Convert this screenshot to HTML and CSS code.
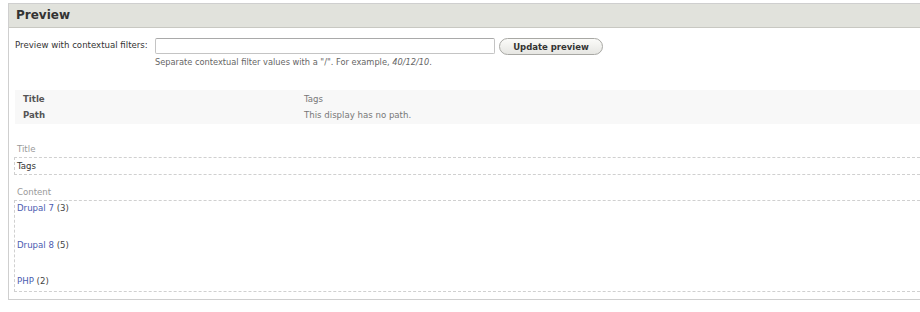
FILE: index.html
```html
<!DOCTYPE html>
<html>
<head>
<meta charset="utf-8">
<title>Preview</title>
<link rel="stylesheet" href="styles.css">
</head>
<body>
<div class="preview">
  <div class="preview-header">Preview</div>
  <div class="preview-body">
    <form class="controls">
      <label class="controls-label" for="args">Preview with contextual filters:</label>
      <div class="controls-field">
        <input class="controls-input" id="args" type="text">
        <div class="controls-desc">Separate contextual filter values with a "/". For example, <em>40/12/10</em>.</div>
      </div>
      <button class="controls-button" type="button">Update preview</button>
    </form>

    <table class="info">
      <tr><th>Title</th><td>Tags</td></tr>
      <tr><th>Path</th><td>This display has no path.</td></tr>
    </table>

    <div class="view">
      <div class="area-label">Title</div>
      <div class="area">Tags</div>
      <div class="area-label area-label-content">Content</div>
      <div class="area area-content">
        <div class="row"><a href="#">Drupal 7</a> (3)</div>
        <div class="row"><a href="#">Drupal 8</a> (5)</div>
        <div class="row"><a href="#">PHP</a> (2)</div>
      </div>
    </div>
  </div>
</div>
</body>
</html>
```

FILE: styles.css
```css
html {
  overflow: hidden;
}

body {
  margin: 3px 0 0 8px;
  font-family: "DejaVu Sans", Verdana, sans-serif;
  font-size: 8.6px;
  color: #333;
  background: #fff;
}

.preview {
  border: 1px solid #cfcfcf;
  border-right: none;
}

.preview-header {
  height: 23px;
  line-height: 23px;
  padding-left: 7px;
  background: #e1e2dc;
  border-bottom: 1px solid #c8c8c2;
  font-size: 12px;
  font-weight: bold;
  color: #333;
}

.preview-body {
  padding: 0 0 7px 0;
}

.controls {
  display: grid;
  grid-template-columns: 140px 340px auto;
  column-gap: 4px;
  align-items: start;
  padding: 10px 0 0 6px;
  margin: 0;
}

.controls-label {
  line-height: 15px;
  color: #333;
}

.controls-input {
  display: block;
  box-sizing: border-box;
  width: 340px;
  height: 16px;
  margin: 0 0 0 -4px;
  padding: 0 3px;
  border: 1px solid #c4c4c4;
  border-top-color: #a9a9a9;
  border-radius: 2px;
  background: #fff;
  font: inherit;
}

.controls-desc {
  margin: 3px 0 0 -4px;
  line-height: 11px;
  font-size: 8.25px;
  color: #666;
}

.controls-desc em {
  font-style: italic;
}

.controls-button {
  box-sizing: border-box;
  width: 104px;
  height: 17px;
  margin: 0 0 0 -4px;
  padding: 0;
  border: 1px solid #a8a8a4;
  border-radius: 9px;
  background: linear-gradient(#fbfbf9, #e6e6e2);
  font-family: "DejaVu Sans", Verdana, sans-serif;
  font-size: 8.5px;
  font-weight: bold;
  color: #333;
}

.info {
  margin: 22px 0 0 6px;
  width: calc(100% - 6px);
  border-collapse: collapse;
  background: #f8f8f8;
}

.info th,
.info td {
  height: 16px;
  padding: 0;
  line-height: 16px;
  text-align: left;
  vertical-align: middle;
}

.info tr:first-child th,
.info tr:first-child td {
  padding-top: 1px;
}

.info tr:last-child th,
.info tr:last-child td {
  padding-bottom: 1px;
}

.info th {
  width: 281px;
  padding-left: 8px;
  font-weight: bold;
  color: #555;
}

.info td {
  color: #777;
}

.view {
  margin: 17px 0 0 5px;
}

.area-label {
  line-height: 16px;
  padding-left: 3px;
  color: #999;
}

.area-label-content {
  margin-top: 9px;
}

.area {
  border: 1px dashed #d0d0d0;
  border-right: none;
  padding-left: 2px;
  line-height: 16px;
  color: #333;
}

.area-content {
  padding-bottom: 2px;
}

.row {
  line-height: 16px;
  margin-bottom: 20.5px;
  color: #444;
}

.row:first-child {
  margin-top: -1px;
}

.row:last-child {
  margin-bottom: 0;
}

.row a {
  color: #4a5bb0;
  text-decoration: none;
}
```
